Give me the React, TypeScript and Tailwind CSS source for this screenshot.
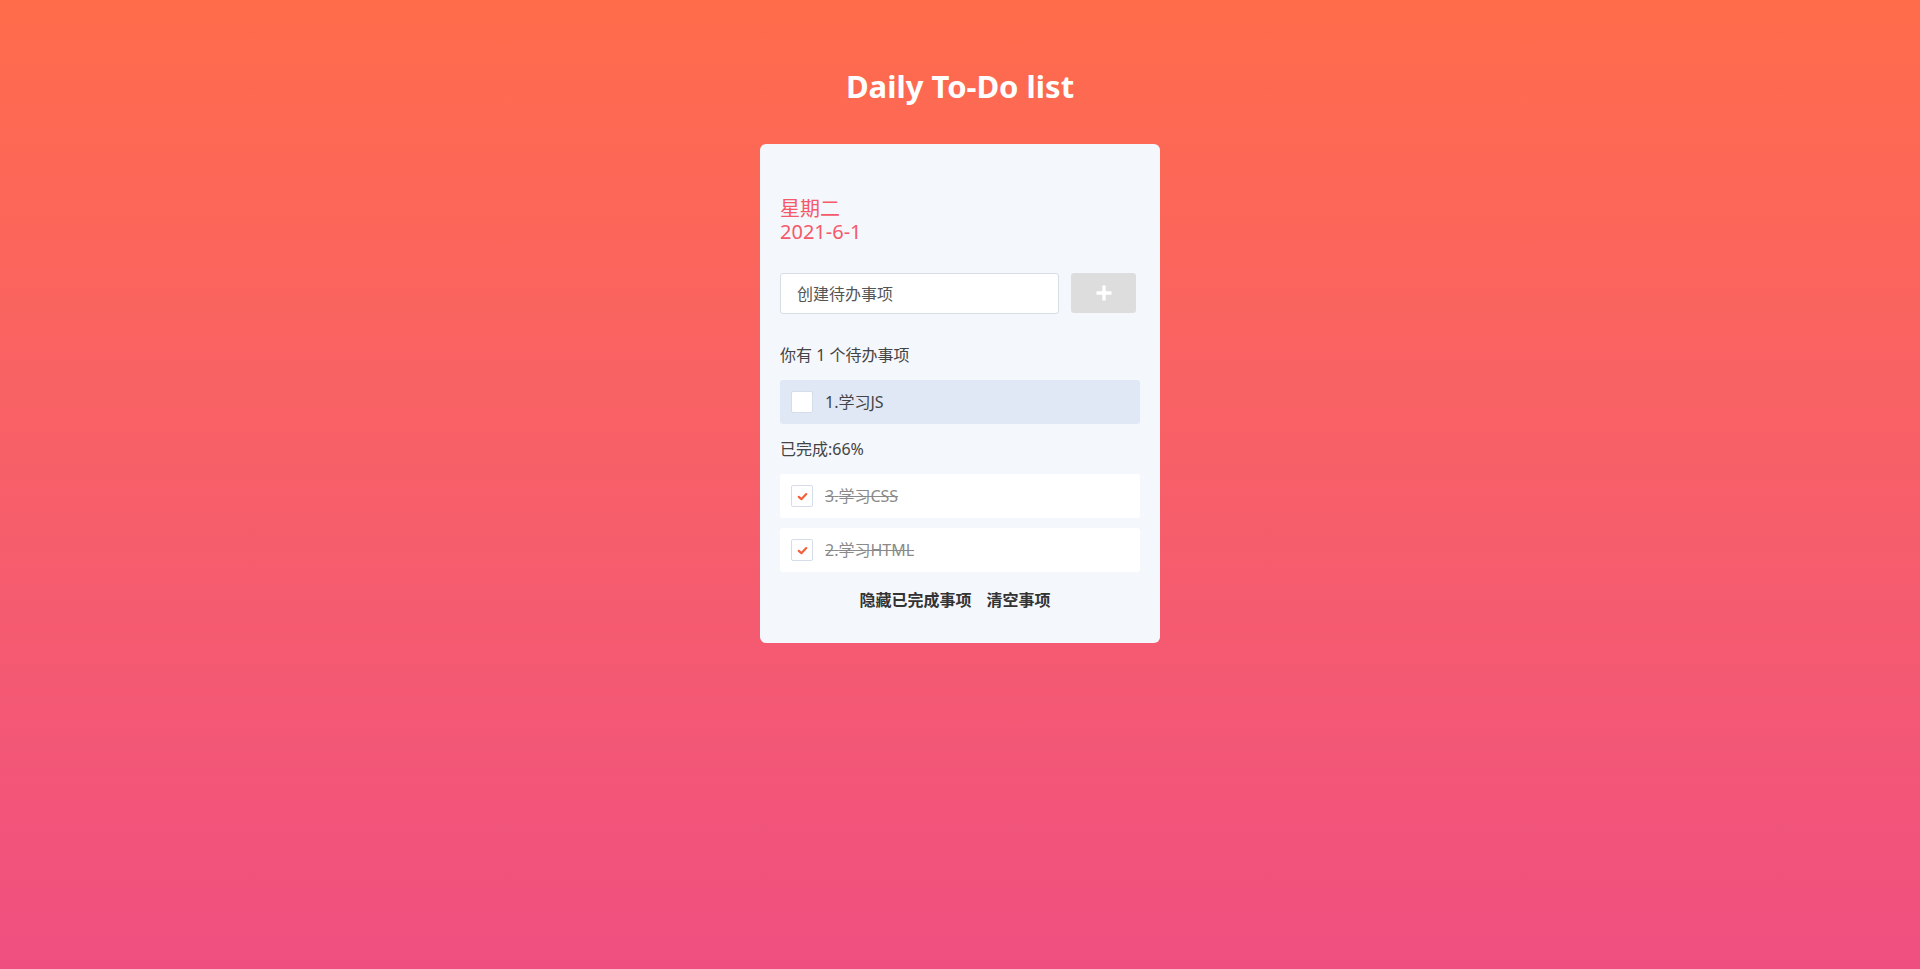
import { useState } from "react";

type Todo = { id: number; title: string; done: boolean };

const font = { fontFamily: '"Noto Sans", "Noto Sans CJK SC", sans-serif' };

function CheckIcon() {
  return (
    <svg width="11" height="11" viewBox="0 0 10 10" fill="none">
      <path d="M1.6 5.3 L4 7.4 L8.4 2.8" stroke="#f5603c" strokeWidth="2" strokeLinecap="round" strokeLinejoin="round" />
    </svg>
  );
}

function PlusIcon() {
  return (
    <svg width="18" height="18" viewBox="0 0 18 18" fill="none">
      <path d="M9 1.5 V16.5 M1.5 9 H16.5" stroke="#ffffff" strokeWidth="3.4" />
    </svg>
  );
}

function TodoRow({ todo, onToggle }: { todo: Todo; onToggle: () => void }) {
  return (
    <li
      className={`flex h-[44px] items-center gap-3 rounded-[3px] pl-[11px] ${
        todo.done ? "bg-white" : "bg-[#e1e8f5]"
      }`}
    >
      <button
        type="button"
        onClick={onToggle}
        className="flex h-[22px] w-[22px] items-center justify-center rounded-[2px] border border-[#d5dde9] bg-white"
      >
        {todo.done && <CheckIcon />}
      </button>
      <span
        className={`text-[16px] leading-5 ${
          todo.done ? "text-[#8a8a8a] line-through" : "text-[#444]"
        }`}
      >
        {todo.id}.{todo.title}
      </span>
    </li>
  );
}

export default function App() {
  const [text, setText] = useState("");
  const [todos, setTodos] = useState<Todo[]>([
    { id: 3, title: "学习CSS", done: true },
    { id: 2, title: "学习HTML", done: true },
    { id: 1, title: "学习JS", done: false },
  ]);

  const pending = todos.filter((t) => !t.done);
  const done = todos.filter((t) => t.done);
  const percent = todos.length ? Math.floor((done.length / todos.length) * 100) : 0;

  function toggle(id: number) {
    setTodos((list) => list.map((t) => (t.id === id ? { ...t, done: !t.done } : t)));
  }

  function add() {
    if (!text.trim()) return;
    const id = todos.length ? Math.max(...todos.map((t) => t.id)) + 1 : 1;
    setTodos([{ id, title: text.trim(), done: false }, ...todos]);
    setText("");
  }

  return (
    <div
      style={font}
      className="flex min-h-screen flex-col items-center bg-gradient-to-b from-[#ff6c4a] to-[#ef4f80] pt-[66px]"
    >
      <h1 className="text-[31px] font-bold leading-[40px] text-white">Daily To-Do list</h1>

      <div className="mt-[38px] w-[400px] rounded-[6px] bg-[#f4f7fc] px-5 pb-[33px] pt-[53px]">
        <div className="text-[20px] leading-[23px] text-[#f5596a]">
          <div>星期二</div>
          <div>2021-6-1</div>
        </div>

        <div className="mt-[30px] flex items-start gap-3">
          <input
            value={text}
            onChange={(e) => setText(e.target.value)}
            placeholder="创建待办事项"
            className="h-[41px] w-[279px] rounded-[3px] border border-[#d8dce3] bg-white px-4 text-[16px] text-[#444] placeholder:text-[#555] focus:outline-none"
          />
          <button
            type="button"
            onClick={add}
            className="flex h-[40px] w-[65px] items-center justify-center rounded-[3px] bg-[#dddddd]"
          >
            <PlusIcon />
          </button>
        </div>

        <p className="mt-[31px] text-[16px] leading-5 text-[#444]">
          你有 {pending.length} 个待办事项
        </p>
        <ul className="mt-[15px] flex flex-col gap-[10px]">
          {pending.map((t) => (
            <TodoRow key={t.id} todo={t} onToggle={() => toggle(t.id)} />
          ))}
        </ul>

        <p className="mt-[15px] text-[16px] leading-5 text-[#444]">已完成:{percent}%</p>
        <ul className="mt-[15px] flex flex-col gap-[10px]">
          {done.map((t) => (
            <TodoRow key={t.id} todo={t} onToggle={() => toggle(t.id)} />
          ))}
        </ul>

        <div className="mt-[18px] flex justify-center gap-[15px] pr-[10px] text-[16px] font-bold leading-5 text-[#333]">
          <button type="button">隐藏已完成事项</button>
          <button type="button" onClick={() => setTodos(pending)}>
            清空事项
          </button>
        </div>
      </div>
    </div>
  );
}
